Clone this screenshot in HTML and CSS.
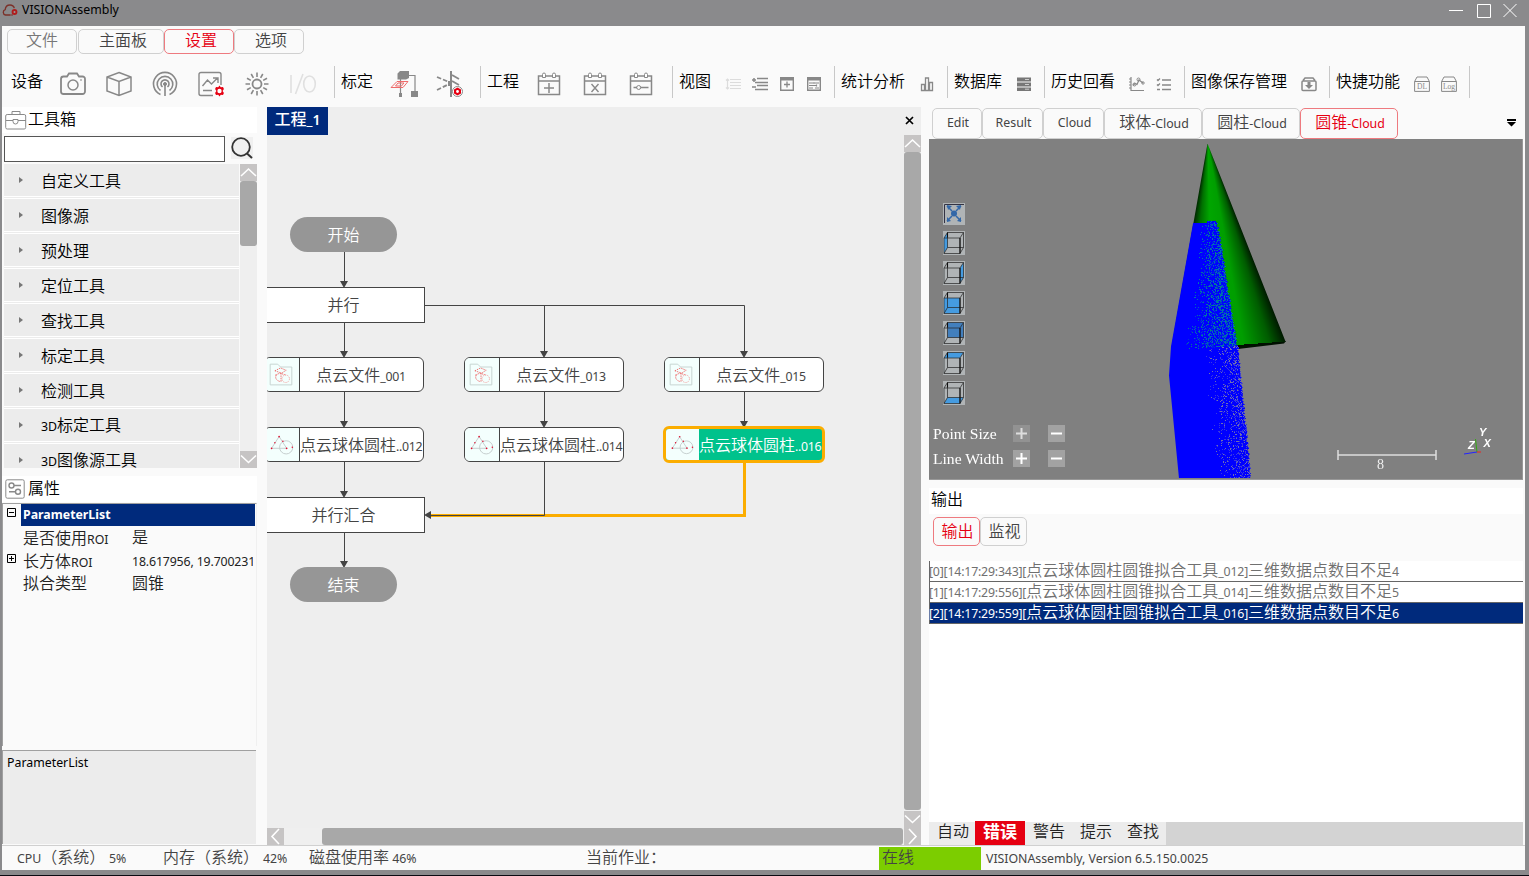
FILE: index.html
```html
<!DOCTYPE html>
<html lang="zh-CN">
<head>
<meta charset="utf-8">
<title>VISIONAssembly</title>
<link rel="stylesheet" href="styles.css">
</head>
<body>
<div class="window">
  <header class="titlebar">
    <svg class="logo" width="16" height="12" viewBox="0 0 16 12"><path d="M8 11H3.500a2.800 2.800 0 0 1-.3-5.400C3.500 2.500 5.500 1 8 1c2.200 0 3.800 1.300 4.300 3.200" fill="none" stroke="#7b3029" stroke-width="1.300"/><circle cx="12.500" cy="8" r="2.900" fill="#b01c1c"/><circle cx="12.500" cy="8" r="1" fill="#999"/><path d="M8 11h3" stroke="#7b3029"/></svg>
    <span class="title">VISIONAssembly</span>
    <svg class="winbtns" width="76" height="20" viewBox="0 0 76 20" fill="none" stroke="#fff"><path d="M4 10.500H18M32.500 4.500h13v13h-13zM58.500 4l13 13M71.500 4l-13 13"/></svg>
  </header>

  <nav class="menu">
    <span class="pill zh dim m1">文件</span><span class="pill zh m2">主面板</span><span class="pill zh on m3">设置</span><span class="pill zh m4">选项</span>
  </nav>

  <div class="toolbar">
    <section class="group g1"><span class="zh">设备</span>
      <div class="big">
        <i><svg width="28" height="28" viewBox="0 0 28 28"><path d="M4.500 6.500H8l2-3h8l2 3h3.500a2.500 2.500 0 0 1 2.500 2.500v12.500a2.500 2.500 0 0 1-2.500 2.500h-19A2.500 2.500 0 0 1 2 21.500V9a2.500 2.500 0 0 1 2.500-2.500z" stroke-width="1.800"/><circle cx="14" cy="15" r="5" stroke-width="1.500"/><path d="M21 10h2"/></svg></i>
        <i><svg width="28" height="28" viewBox="0 0 28 28"><path d="M14 2.500l12 4.500v14l-12 4.500L2 21V7zM2 7l12 4.500L26 7M14 11.500v14" stroke-width="1.500"/></svg></i>
        <i><svg width="28" height="28" viewBox="0 0 28 28"><path d="M9.500 24.500a11.500 11.500 0 1 1 9 0M9.500 20.500a7.800 7.800 0 1 1 9 0M11.500 17a4 4 0 1 1 5 0M14 15v11" stroke-width="1.600"/><circle cx="14" cy="14" r="1.500" fill="#888"/></svg></i>
        <i><svg width="28" height="28" viewBox="0 0 28 28"><path d="M24 15V4.500A2 2 0 0 0 22 2.500H4a2 2 0 0 0-2 2v19a2 2 0 0 0 2 2h12M5.500 16l5-6 4 4 6-6M16 8h5v5M6 20.500h9" stroke-width="1.400"/><path class="red" d="M22.500 15.500l1.300 1.800 2.200-.2.900 2-1.300 1.900 1.300 1.900-.9 2-2.200-.2-1.300 1.800-1.300-1.800-2.200.2-.9-2 1.300-1.900-1.300-1.900.9-2 2.200.2z"/><circle cx="22.500" cy="21" r="2.200" fill="#fff" stroke="none"/></svg></i>
        <i><svg width="28" height="28" viewBox="0 0 28 28"><circle cx="14" cy="14" r="4.500" stroke-width="1.800"/><path d="M14 2.500V7M14 21v4.500M2.500 14H7M21 14h4.500M8.200 4l2.200 3.800M17.600 20.200l2.200 3.800M4 8.200l3.800 2.200M20.200 17.600l3.800 2.200M4 19.800l3.800-2.200M20.200 10.400L24 8.200M8.200 24l2.200-3.800M17.600 7.800L19.800 4" stroke-width="1.600"/></svg></i>
        <i><svg width="28" height="28" viewBox="0 0 28 28"><path d="M2 5v18M6.500 24L14 4" stroke="#e0e0e0" stroke-width="1.600"/><ellipse cx="20.500" cy="14" rx="5.800" ry="8" stroke="#e0e0e0" stroke-width="1.600"/></svg></i>
      </div></section>
    <section class="group g2"><span class="zh">标定</span>
      <div class="big">
        <i><svg width="28" height="28" viewBox="0 0 28 28"><path d="M7.500 3.500L10 1h9v7l-3 1.500H7.500zM21 21h7v6h-7zM9 23h3v4H9z" fill="#888" stroke="none"/><path d="M19 5.500h6V21M10.500 9v14" stroke-width="1.200"/><path d="M1 17.500l6-6h11l-5 6zM5.500 16l2.500-3h6l-2.500 3z" stroke="#ee6b6b"/></svg></i>
        <i><svg width="28" height="28" viewBox="0 0 28 28"><path d="M15 1v26" stroke-width="2"/><path d="M16 5l7 4M16 11l7 4" stroke-width="1.800"/><path d="M1 7l12 5M1 20l12-6" stroke-width="1.800" stroke-dasharray="4.500 2"/><path d="M12 11h4v5h-4z" fill="#888" stroke="none"/><circle cx="21.500" cy="21.500" r="5" fill="#fff"/><path class="red" d="M21.500 17.500l3.500 2v4l-3.500 2-3.500-2v-4z"/><circle cx="21.500" cy="21.500" r="1.400" fill="#fff" stroke="none"/></svg></i>
      </div></section>
    <section class="group g3"><span class="zh">工程</span>
      <div class="big">
        <i><svg width="28" height="28" viewBox="0 0 28 28"><path d="M3.500 6h21v18.500h-21zM4 11h20" stroke-width="1.500"/><path d="M7.500 7.500V4.500a1.500 1.500 0 0 1 3 0v3zM17.500 7.500V4.500a1.500 1.500 0 0 1 3 0v3z" fill="#fff"/><path d="M14 13v10M9 18h10" stroke-width="1.500"/></svg></i>
        <i><svg width="28" height="28" viewBox="0 0 28 28"><path d="M3.500 6h21v18.500h-21zM4 11h20" stroke-width="1.500"/><path d="M7.500 7.500V4.500a1.500 1.500 0 0 1 3 0v3zM17.500 7.500V4.500a1.500 1.500 0 0 1 3 0v3z" fill="#fff"/><path d="M10.500 14l7 8M17.500 14l-7 8" stroke-width="1.400"/></svg></i>
        <i><svg width="28" height="28" viewBox="0 0 28 28"><path d="M3.500 6h21v18.500h-21zM4 11h20" stroke-width="1.500"/><path d="M7.500 7.500V4.500a1.500 1.500 0 0 1 3 0v3zM17.500 7.500V4.500a1.500 1.500 0 0 1 3 0v3z" fill="#fff"/><path d="M6.500 17.500H10M13.500 17.500h8" stroke-width="1.400"/><circle cx="11.700" cy="17.500" r="2"/></svg></i>
      </div></section>
    <section class="group g4"><span class="zh">视图</span>
      <div class="small">
        <i><svg width="16" height="16" viewBox="0 0 16 16"><path d="M5 3.500h11M5 6.500h11M5 9.500h11M5 12.500h11M2.500 3v10M1 4.500L2.500 3 4 4.500M1 11.500L2.500 13 4 11.500" stroke="#dcdcdc" stroke-width="1.200"/></svg></i>
        <i><svg width="16" height="16" viewBox="0 0 16 16"><path d="M5 2.500h11M3 6.500h13M5 9.500h11M3 13.500h13" stroke-width="1.500"/><path d="M0 4h4M2 2v4M0 11h4" stroke-width="1.500"/></svg></i>
        <i><svg width="16" height="16" viewBox="0 0 16 16"><path d="M1.700 1.700h12.600v12.600H1.700z" stroke-width="1.400"/><path d="M1 3h14" stroke-width="3"/><path d="M8 5.500v6M5 8.500h6" stroke-width="1.300"/></svg></i>
        <i><svg width="16" height="16" viewBox="0 0 16 16"><path d="M1.700 1.700h12.600v12.600H1.700z" stroke-width="1.400"/><path d="M1 3h14" stroke-width="3"/><path d="M3 7h4M9 7h4M3 9.500h8M3 12h4M9 12h4M8 6v2M10.500 8.500v2" stroke-width="1.200"/></svg></i>
      </div></section>
    <section class="group g5"><span class="zh">统计分析</span>
      <div class="small"><i><svg width="16" height="16" viewBox="0 0 16 16"><path d="M2.500 8.500h3v6h-3zM6.500 2h3v12.500h-3zM10.500 6.500h3v8h-3z" stroke-width="1.300"/></svg></i></div></section>
    <section class="group g6"><span class="zh">数据库</span>
      <div class="small"><i><svg width="16" height="16" viewBox="0 0 16 16"><path d="M1 1.500h14v4H1zM1 6.500h14v4H1zM1 11.500h14v3.500H1z" fill="#777" stroke="none"/><path d="M9 3.500h4M9 8.500h4M9 13.200h4" stroke="#ccc"/></svg></i></div></section>
    <section class="group g7"><span class="zh">历史回看</span>
      <div class="small">
        <i><svg width="16" height="16" viewBox="0 0 16 16"><path d="M2 1v13.500h13M0 3h2M0 6h2M0 9h2M0 12h2M4 9.500l2-2 2 1L10 4l4 3" stroke-width="1.200"/><circle cx="5.500" cy="8.500" r="1.500"/><circle cx="9.500" cy="3.500" r="1.500"/><circle cx="14" cy="7" r="1.200"/></svg></i>
        <i><svg width="16" height="16" viewBox="0 0 16 16"><path d="M6 4h9M6 9h9M6 13.500h9M1 3.500l1 1 2-2M1 8.500l1 1 2-2M1 13.500h3" stroke-width="1.300"/></svg></i>
      </div></section>
    <section class="group g8"><span class="zh">图像保存管理</span>
      <div class="small"><i><svg width="16" height="16" viewBox="0 0 16 16"><path d="M2 5h12a1 1 0 0 1 1 1v7.500a1 1 0 0 1-1 1H2a1 1 0 0 1-1-1V6a1 1 0 0 1 1-1zM2 4.500l2-2.500h8l2 2.500" stroke-width="1.500"/><path d="M6.500 6h3v3H12l-4 4-4-4h2.500z" fill="#888" stroke="none"/></svg></i></div></section>
    <section class="group g9"><span class="zh">快捷功能</span>
      <div class="small">
        <i><svg width="16" height="16" viewBox="0 0 16 16"><path d="M.6 5.500h14.800v9.900H.6zM.6 5.500L3 1h10l2.400 4.500"/><text x="8" y="12.800" class="tiny">DL</text></svg></i>
        <i><svg width="16" height="16" viewBox="0 0 16 16"><path d="M.6 5.500h14.800v9.900H.6zM.6 5.500L3 1h10l2.400 4.500"/><text x="8" y="12.800" class="tiny">Log</text></svg></i>
      </div></section>
    <section class="group last"></section>
  </div>

  <main class="workspace">
    <aside class="left">
      <div class="head"><svg width="22" height="20" viewBox="0 0 22 20" fill="none" stroke="#8a8a8a"><rect x=".7" y="4.500" width="20" height="14.500" rx="1.500"/><path d="M7 4V1.500h8V4M1 10.500h7M13 10.500h8M8 9.500h5v2a2.500 2.500 0 0 1-5 0z"/></svg><span class="zh">工具箱</span></div>
      <div class="search"><div class="box"></div><svg width="22" height="22" viewBox="0 0 22 22" fill="none" stroke="#333"><circle cx="10" cy="10" r="8.800" stroke-width="1.800"/><path d="M16 16.500l5 4.500" stroke-width="2"/></svg></div>
      <div class="tools">
        <ul class="list">
          <li><span class="zh">自定义工具</span></li><li><span class="zh">图像源</span></li><li><span class="zh">预处理</span></li><li><span class="zh">定位工具</span></li><li><span class="zh">查找工具</span></li><li><span class="zh">标定工具</span></li><li><span class="zh">检测工具</span></li><li><span>3D<span class="zh">标定工具</span></span></li><li><span>3D<span class="zh">图像源工具</span></span></li>
        </ul>
        <div class="vscroll"><b class="sb"><svg width="17" height="17"><path d="M1 12l7.500-7 7.500 7"/></svg></b><b class="thumb t1"></b><b class="sb end"><svg width="17" height="17"><path d="M1 4.500l7.500 7 7.500-7"/></svg></b></div>
      </div>
      <div class="head second"><svg width="20" height="20" viewBox="0 0 20 20" fill="none" stroke="#8a8a8a"><rect x=".8" y=".8" width="18.400" height="18.400" rx="1.500"/><g stroke-width="1.400"><circle cx="6.500" cy="6.500" r="2.500"/><path d="M9 6.500h7M4 12.800h6.500"/><circle cx="13" cy="12.800" r="2.500"/></g></svg><span class="zh">属性</span></div>
      <div class="props">
        <div class="prow sel"><em><svg width="9" height="9"><path d="M.5.500h8v8h-8zM2 4.500h5"/></svg></em><strong>ParameterList</strong></div>
        <div class="prow"><em></em><span class="k"><span class="zh">是否使用</span>ROI</span><span class="v zh">是</span></div>
        <div class="prow"><em><svg width="9" height="9"><path d="M.5.500h8v8h-8zM2 4.500h5M4.500 2v5"/></svg></em><span class="k"><span class="zh">长方体</span>ROI</span><span class="v num-v">18.617956, 19.700231</span></div>
        <div class="prow"><em></em><span class="k zh">拟合类型</span><span class="v zh">圆锥</span></div>
      </div>
      <div class="desc">ParameterList</div>
    </aside>

    <section class="center">
      <div class="doctabs"><span class="doctab"><span class="zh">工程</span>_1</span><svg width="9" height="9" viewBox="0 0 9 9"><path d="M1 1l7 7M8 1L1 8" stroke="#000" stroke-width="1.700"/></svg></div>
      <div class="canvasrow">
        <div class="flow">
          <svg class="edges" width="637" height="693" viewBox="267 135 637 693" fill="none" stroke="#444">
            <path d="M744.500 461V515.500H428" stroke="#fbad00" stroke-width="3"/>
            <path d="M344.500 251v34M344.500 323v32M344.500 392v33M344.500 462v33M344.500 533v32M424 305.500H744.500V355M544.500 305V355M544.500 392v33M744.500 392v33M544.500 462V515.500H428"/>
            <path class="tip" d="M340 281h8l-4 7zM340 351h8l-4 7zM340 421h8l-4 7zM340 491h8l-4 7zM340 561h8l-4 7zM540 351h8l-4 7zM540 421h8l-4 7zM740 351h8l-4 7zM740 421h8l-4 7zM431 511v8l-7-4z"/>
          </svg>
          <div class="term s"><span class="zh">开始</span></div>
          <div class="par p1"><span class="zh">并行</span></div>
          <div class="node c1 r1"><svg class="ico"><use href="#cloudfile"/></svg><span><span class="zh">点云文件</span>_001</span></div>
          <div class="node c2 r1"><svg class="ico"><use href="#cloudfile"/></svg><span><span class="zh">点云文件</span>_013</span></div>
          <div class="node c3 r1"><svg class="ico"><use href="#cloudfile"/></svg><span><span class="zh">点云文件</span>_015</span></div>
          <div class="node c1 r2"><svg class="ico"><use href="#fit"/></svg><span><span class="zh">点云球体圆柱</span>..012</span></div>
          <div class="node c2 r2"><svg class="ico"><use href="#fit"/></svg><span><span class="zh">点云球体圆柱</span>..014</span></div>
          <div class="node c3 r2 active"><svg class="ico"><use href="#fit"/></svg><span><span class="zh">点云球体圆柱</span>..016</span></div>
          <div class="par p2"><span class="zh">并行汇合</span></div>
          <div class="term e"><span class="zh">结束</span></div>
        </div>
        <div class="vscroll"><b class="sb"><svg width="17" height="17"><path d="M1 12l7.500-7 7.500 7"/></svg></b><b class="thumb t2"></b><b class="sb end"><svg width="17" height="17"><path d="M1 4.500l7.500 7 7.500-7"/></svg></b></div>
      </div>
      <div class="hscroll"><b class="sb"><svg width="17" height="17"><path d="M12 1L5 8.500l7 7.500"/></svg></b><b class="hthumb"></b><b class="sb"><svg width="17" height="17"><path d="M5 1l7 7.500L5 16"/></svg></b></div>
    </section>

    <section class="right">
      <div class="vtabs"><span class="pill v1">Edit</span><span class="pill v2">Result</span><span class="pill v3">Cloud</span><span class="pill v4"><span><span class="zh">球体</span>-Cloud</span></span><span class="pill v4"><span><span class="zh">圆柱</span>-Cloud</span></span><span class="pill v4 on"><span><span class="zh">圆锥</span>-Cloud</span></span><svg class="drop" width="9" height="8"><path d="M0 0h9v2H0zM0 3h9L4.500 7.500z"/></svg></div>
      <div class="viewer">
        <canvas id="cloud" width="594" height="340"></canvas>
        <div class="overlay">
          <div class="cubes">
            <i class="fitall"><svg width="22" height="21" viewBox="0 0 22 21"><path d="M1.500 20V1.500H21" stroke="#334"/><path d="M4 3l5 5M18 3l-5 5M4 18l5-5M18 18l-5-5" stroke="#3468a8" stroke-width="1.500"/><path d="M4 2l5 1-4 4zM18 2l-5 1 4 4zM4 19l4-1-4-4zM18 19l-4-1 4-4z" fill="#3468a8"/><circle cx="11" cy="10.500" r="3" fill="#3468a8"/></svg></i>
            <i><svg width="22" height="24"><path class="face" d="M1 7l3.500-5.500v15L1 22z"/><use href="#wire"/></svg></i>
            <i><svg width="22" height="24"><path class="face" d="M17 7l3.500-5.500v15L17 22z"/><use href="#wire"/></svg></i>
            <i><svg width="22" height="24"><path class="face" d="M1 7h16v15.500H1z"/><use href="#wire"/></svg></i>
            <i><svg width="22" height="24"><path class="face deep" d="M4.500 1.500h16v15h-16z"/><use href="#wire"/></svg></i>
            <i><svg width="22" height="24"><path class="face" d="M1 7l3.500-5.500h16L17 7z"/><use href="#wire"/></svg></i>
            <i><svg width="22" height="24"><path class="face" d="M1 22.500l3.500-6h16l-3.500 6z"/><use href="#wire"/></svg></i>
          </div>
          <div class="ctl"><span>Point Size</span><i class="off"><svg width="17" height="17"><path d="M3 8.500h11M8.500 3v11"/></svg></i><i><svg width="17" height="17"><path d="M3 8.500h11"/></svg></i></div>
          <div class="ctl"><span>Line Width</span><i><svg width="17" height="17"><path d="M3 8.500h11M8.500 3v11"/></svg></i><i><svg width="17" height="17"><path d="M3 8.500h11"/></svg></i></div>
        </div>
        <svg class="gauge" width="190" height="58" viewBox="1330 420 190 58"><path d="M1338 455H1436M1338 450v10M1436 450v10" stroke="#ddd" stroke-width="1.500" fill="none"/><text x="1380.500" y="468.500" class="num">8</text><path d="M1477 452l-13 2" stroke="#22f"/><path d="M1477 452l-1.500-13" stroke="#3a1"/><path d="M1477 452h4" stroke="#e22"/><g class="axis"><text x="1479" y="436">Y</text><text x="1483.500" y="447">X</text><text x="1468" y="449">Z</text></g></svg>
      </div>
      <div class="outhead"><span class="zh">输出</span></div>
      <div class="outtabs"><span class="pill zh on">输出</span><span class="pill zh">监视</span></div>
      <div class="log">
        <div class="line">[0][14:17:29:343][<span class="zh">点云球体圆柱圆锥拟合工具</span>_012]<span class="zh">三维数据点数目不足</span>4</div>
        <div class="line">[1][14:17:29:556][<span class="zh">点云球体圆柱圆锥拟合工具</span>_014]<span class="zh">三维数据点数目不足</span>5</div>
        <div class="line cur">[2][14:17:29:559][<span class="zh">点云球体圆柱圆锥拟合工具</span>_016]<span class="zh">三维数据点数目不足</span>6</div>
      </div>
      <div class="bottomtabs zh"><span>自动</span><span class="err">错误</span><span>警告</span><span>提示</span><span>查找</span></div>
    </section>
  </main>

  <footer class="status">
    <span class="s1">CPU<span class="zh">（系统）</span></span><span class="s2">5%</span><span class="s3 zh">内存（系统）</span><span class="s4">42%</span><span class="s5"><span class="zh">磁盘使用率</span> 46%</span><span class="s6 zh">当前作业：</span><span class="online zh">在线</span><span class="ver">VISIONAssembly, Version 6.5.150.0025</span>
  </footer>
</div>
<svg width="0" height="0" class="defs"><defs>
  <symbol id="wire" viewBox="0 0 22 24" overflow="visible"><path d="M1 7h16v15.500H1zM4.500 1.500h16v15h-16zM1 7l3.500-5.500M17 7l3.500-5.500M1 22.500l3.500-6M17 22.500l3.500-6" fill="none" stroke="#222" stroke-width=".7"/><path d="M17 7v15.500M4.500 1.500v5" fill="none" stroke="#111" stroke-width="1.100"/></symbol>
  <symbol id="cloudfile" viewBox="0 0 34 34"><path d="M5.500 5.500h8l3 3h12v19h-23z" fill="none" stroke="#c4d2d0"/><g fill="none" stroke="#ee6a6a" stroke-dasharray="1.500 1"><path d="M10.500 12.500l6-3 6 2.500-5 3zM11 17l5-2 6 2M17 15v9M12 17c-2 4 1 6 4 7"/><circle cx="22" cy="21" r="4" stroke="#f3a5a5"/></g></symbol>
  <symbol id="fit" viewBox="0 0 34 34"><g fill="none" stroke="#c3cccc"><circle cx="22.500" cy="19.500" r="7"/><path d="M7 20.500L15 8l8 12.500z"/></g><g fill="#e01030"><circle cx="15" cy="8" r=".9"/><circle cx="7" cy="20.500" r=".9"/><circle cx="23" cy="20.500" r=".9"/><circle cx="10.500" cy="14.500" r=".8"/><circle cx="19" cy="13" r=".8"/><circle cx="29" cy="19.500" r=".8"/></g></symbol>
</defs></svg>
<script src="cloud.js"></script>
</body>
</html>
```
FILE: styles.css
```css
* { box-sizing: border-box; }
body { margin: 0; width: 1529px; height: 876px; overflow: hidden; background: #8a8a8c; font: 12.350px/20px "Noto Sans", "Noto Sans CJK SC", sans-serif; color: #000; }
i, em { font-style: normal; }
svg { display: block; flex: none; }
.defs { position: absolute; }
.zh { font-family: "Noto Sans CJK SC", sans-serif; font-size: 16px; font-weight: 350; line-height: 20px; letter-spacing: 0; }
.window { height: 876px; padding: 0 4px 0 2px; border-bottom: 1px solid #0a0a12; display: flex; flex-direction: column; }
.titlebar { height: 26px; flex: none; display: flex; align-items: flex-start; }
.logo { margin: 4px 0 0; }
.title { margin-left: 4px; line-height: 19px; }
.winbtns { margin-left: auto; margin-right: 4px; }
.menu { height: 28px; flex: none; background: #fafafa; padding: 3px 0 0 5px; display: flex; }
.pill { border: 1px solid #d0d0d0; border-radius: 5px; display: flex; align-items: center; justify-content: center; color: #444; white-space: nowrap; }
.menu .pill { height: 25px; padding-bottom: 6px; }
.pill.dim { color: #777; }
.pill.on { border-color: #ee7a7f; color: #e60012; }
.m1 { width: 70px; margin-right: 1px; }
.m2 { width: 86px; padding-left: 4px; }
.m3 { width: 70px; padding-left: 4px; }
.m4 { width: 70px; padding-left: 4px; }

.toolbar { height: 53px; flex: none; background: #fafafa; display: flex; padding-top: 12px; }
.group { height: 32px; border-left: 1px solid #c8c8c8; padding: 4px 7px 0; display: flex; justify-content: space-between; white-space: nowrap; }
.g1 { width: 332px; border-color: transparent; padding: 4px 8px 0 8px; }
.g2 { width: 146px; padding: 4px 7px 0 6px; }
.g3 { width: 192px; padding: 4px 8px 0 6px; }
.g4 { width: 162px; padding-left: 6px; }
.g5 { width: 113px; padding-left: 6px; }
.g6 { width: 97px; padding-left: 6px; }
.g7 { width: 140px; padding-left: 6px; }
.g8 { width: 145px; padding-left: 6px; }
.g9 { width: 140px; padding-left: 6px; }
.big, .small { display: flex; align-items: center; height: 28px; }
.big i, .small i { display: flex; justify-content: center; }
.big i { width: 46px; }
.small i { width: 27px; }
.group svg { fill: none; stroke: #888; }
.group .red { fill: #e60012; stroke: none; }
.tiny { font: 7.500px "Liberation Serif", serif; fill: #888; stroke: none; text-anchor: middle; }

.workspace { height: 738px; flex: none; display: flex; background: #fafafa; }
.left { width: 265px; flex: none; padding-right: 10px; }
.head { height: 26px; background: #fff; display: flex; align-items: center; padding-left: 3px; gap: 1px; }
.head svg { margin-top: -1px; }
.head .zh { margin-top: -4px; }
.second { margin-top: 8px; gap: 3px; }
.search { height: 31px; padding: 3px 2px 0; display: flex; gap: 6px; }
.box { width: 221px; height: 26px; border: 1px solid #555; background: #fff; }
.search svg { margin-top: 1px; background: #f0f0f0; }
.tools { height: 304px; display: flex; justify-content: space-between; padding-left: 2px; }
.list { list-style: none; margin: 0; padding: 0; width: 235px; height: 304px; overflow: hidden; background: #ececec; }
.list li { height: 35px; padding: 0 0 3px 37px; display: flex; align-items: center; position: relative; background: linear-gradient(#ececec 32px, #fff 32px, #fff 33px, #ececec 33px, #ececec 34px, #fff 34px); }
.list li::before { content: ""; position: absolute; left: 15px; top: 13px; border-left: 4px solid #777; border-top: 3.500px solid transparent; border-bottom: 3.500px solid transparent; }
.vscroll { width: 17px; background: #efefef; display: flex; flex-direction: column; }
.sb { width: 17px; height: 17px; flex: none; background: #c6c4c4; }
.sb svg { fill: none; stroke: #fff; stroke-width: 1.600; }
.end { margin-top: auto; }
.thumb, .hthumb { background: #a8a8a8; border-radius: 3px; }
.t1 { height: 65px; }
.t2 { height: 658px; }
.props { height: 243px; margin-top: 1px; border: 1px solid #a0a0a0; border-right-color: #f0f0f0; border-bottom: 0; background: #fafafa; overflow: hidden; }
.prow { height: 23px; display: flex; width: 252px; }
.prow em { width: 18px; flex: none; padding: 4px 0 0 4px; }
.prow em svg { fill: none; stroke: #000; }
.prow .k { width: 111px; flex: none; padding-left: 2px; color: #222; white-space: nowrap; line-height: 19px; }
.prow .v { white-space: nowrap; width: 121px; color: #222; line-height: 19px; }
.prow .num-v { overflow: hidden; padding-top: 2px; letter-spacing: -.15px; }
.sel strong { flex: 1; background: #002a7c; color: #fff; height: 22px; padding-left: 2px; line-height: 21px; }
.desc { height: 94px; margin-top: 4px; margin-right: 1px; border: 1px solid #a0a0a0; border-right: 0; border-bottom: 0; background: #ececec; padding: 2px 4px; }

.center { width: 654px; flex: none; background: #eee; display: flex; flex-direction: column; }
.doctabs { height: 28px; display: flex; justify-content: space-between; align-items: flex-start; }
.doctabs svg { margin: 9px 7px 0 0; }
.doctab { width: 61px; height: 28px; background: #002a7c; color: #fff; text-align: center; font-weight: 600; font-size: 14px; line-height: 25px; }
.doctab .zh { font-weight: 500; }
.canvasrow { height: 693px; display: flex; }
.flow { width: 637px; position: relative; overflow: hidden; color: #444; }
.edges { position: absolute; left: 0; top: 0; }
.tip { fill: #444; stroke: none; }
.term, .par, .node { position: absolute; display: flex; align-items: center; justify-content: center; height: 35px; padding-bottom: 2px; }
.term { left: 23px; width: 107px; border-radius: 18px; background: #969696; color: #fff; }
.s { top: 82px; }
.e { top: 432px; }
.par { left: -3px; width: 161px; height: 36px; background: #fff; border: 1px solid #444; padding-right: 2px; }
.p1 { top: 152px; }
.p2 { top: 362px; }
.node { width: 160px; background: #fff; border: 1px solid #444; border-radius: 6px; overflow: hidden; white-space: nowrap; justify-content: flex-start; padding: 0; letter-spacing: -.3px; }
.node > span { flex: 1; text-align: center; padding: 1px 1px 0 0; }
.ico { width: 35px; height: 34px; padding-right: 2px; background: #f3fffd; border-right: 1px solid #444; }
.c1 { left: -3px; }
.c2 { left: 197px; }
.c3 { left: 397px; }
.r1 { top: 222px; }
.r2 { top: 292px; }
.active { left: 396px; top: 291px; width: 162px; height: 37px; border: 3px solid #fbad00; background: #00c28c; color: #fff; }
.active .ico { width: 33px; border: 0; }
.hscroll { height: 17px; display: flex; background: #efefef; }
.hthumb { margin-left: 38px; margin-right: 1px; flex: 1; }

.right { width: 594px; flex: none; margin-left: 8px; display: flex; flex-direction: column; }
.vtabs { height: 32px; display: flex; padding: 1px 0 0 3px; color: #444; }
.vtabs .pill { height: 31px; padding: 0 0 2px 2px; }
.v1 { width: 50px; } .v2 { width: 61px; } .v3 { width: 61px; } .v4 { width: 98px; }
.drop { margin: 11px 7px 0 auto; }
.viewer { height: 341px; flex: none; position: relative; background: #808080; border-right: 1px solid #999; border-bottom: 1px solid #999; }
#cloud, .overlay, .gauge { position: absolute; left: 0; top: 0; }
.gauge { left: 401px; top: 281px; }
.overlay { padding: 64px 0 0 4px; color: #fff; }
.cubes { padding-left: 10px; display: flex; flex-direction: column; gap: 6px; margin-bottom: 16px; }
.cubes i { width: 22px; height: 24px; background: #b0b4b6; }
.cubes .fitall { height: 22px; }
.cubes svg { fill: none; }
.face { fill: #459be0; }
.face.deep { fill: #427fbd; }
.ctl { height: 25px; display: flex; align-items: center; }
.ctl span { width: 80px; font: 15.600px "Liberation Serif", serif; }
.ctl i { background: #a2a2a2; width: 17px; height: 17px; margin-right: 18px; }
.ctl i.off { background: #929292; }
.ctl svg { stroke: #fff; stroke-width: 2; fill: none; }
.ctl .off svg { stroke: #ddd; }
.num { fill: #eee; font: 14px "Liberation Serif", serif; text-anchor: middle; }
.axis { fill: #fff; font: italic bold 11px "Liberation Sans", sans-serif; }
.outhead { height: 26px; flex: none; margin-top: 8px; padding: 0 2px; background: #fff; }
.outtabs { height: 47px; flex: none; padding: 3px 4px; display: flex; }
.outtabs .pill { width: 47px; height: 29px; padding: 0 0 4px 2px; }
.log { height: 261px; flex: none; background: #fff; }
.line { height: 21px; border-bottom: 1px solid #666; border-left: 1px solid #666; color: #707070; white-space: nowrap; line-height: 17px; letter-spacing: -.2px; text-indent: -1px; }
.line .zh { line-height: 17px; }
.cur { background: #002a7c; color: #fff; }
.bottomtabs { height: 23px; background: #d3d3d3; display: flex; color: #222; }
.bottomtabs span { width: 47px; padding-left: 8px; background: #ececec; line-height: 17px; }
.bottomtabs span:first-child { width: 46px; padding-left: 8px; }
.bottomtabs .err { width: 50px; height: 24px; margin-top: -1px; padding-left: 8px; background: #e60012; color: #fff; font-weight: 700; font-size: 17px; line-height: 19px; }

.status { height: 25px; flex: none; background: #fafafa; border-top: 1px solid #d0d0d0; display: flex; color: #444; white-space: nowrap; line-height: 22px; }
.status > span { flex: none; }
.s1 { width: 107px; padding-left: 15px; }
.s2, .s4 { padding-top: 2px; }
.s2 { width: 54px; }
.s3 { width: 100px; }
.s4 { width: 44px; }
.s5 { width: 279px; padding-left: 2px; }
.s6 { width: 293px; }
.online { width: 102px; margin-top: 1px; padding-left: 3px; background: #7ccd00; line-height: 18px; }
.ver { padding: 2px 0 0 5px; letter-spacing: -.02px; }
```
FILE: cloud.js
```javascript
// Draws the fitted cone and the scanned point cloud in viewer coordinates.
const ctx = document.getElementById('cloud').getContext('2d');
ctx.translate(-929, -139);

let seed = 7;
const rnd = () => (seed = (seed * 16807) % 2147483647) / 2147483647;
const poly = (color, pts) => {
  ctx.fillStyle = color;
  ctx.beginPath();
  pts.forEach(([x, y]) => ctx.lineTo(x, y));
  ctx.fill();
};

// Cone base, then the shaded side drawn as slices from the apex.
poly('#001000', [[1190, 343], [1286, 341], [1284, 343.500], [1238, 349], [1190, 349]]);
for (let y = 143; y < 346; y++) {
  const t = (y - 143) / 198;
  const left = 1207.500 - 35 * t;
  const edge = 1207.500 + 78 * t;
  const right = Math.min(edge, 1286 - Math.max(0, y - 341) * 14);
  const g = ctx.createLinearGradient(left, 0, edge + 1, 0);
  g.addColorStop(0, '#002800');
  g.addColorStop(0.15, '#007000');
  g.addColorStop(0.35, '#00a600');
  g.addColorStop(0.62, '#009e00');
  g.addColorStop(0.85, '#005c00');
  g.addColorStop(1, '#001400');
  ctx.fillStyle = g;
  ctx.fillRect(left, y, Math.max(0, right - left), 1);
}

// Left and right outline of the scanned body at a given height.
const leftAt = y => y < 346 ? 1193 - 22 * (y - 223) / 123
  : y < 375 ? 1171 - 2 * (y - 346) / 29 : 1169 + 10 * (y - 375) / 103;
const rightAt = y => y < 346 ? 1217 + 20 * (y - 221) / 125 : 1238 + 13 * (y - 346) / 132;

for (let y = 221; y < 478; y++) {
  const l = leftAt(y);
  const r = rightAt(y) + rnd() * 2 - 1;
  const start = y < 223 ? 1207 : l;
  ctx.fillStyle = '#0000ff';
  ctx.fillRect(start, y, r - start, 1);
  for (let x = Math.ceil(start); x < r; x++) {
    const u = (x - l) / (r - l);
    if (y < 349 - (x - 1182) * 0.06) {
      const low = y > 325 ? 0.16 : 0.26;
      const p = Math.max(0, Math.min(0.5, (u - low) * 0.9));
      if (rnd() < p) {
        ctx.fillStyle = ['#0030d8', '#0048cc', '#0064c0', '#0078a8', '#008088'][Math.floor(rnd() * 5)];
        ctx.fillRect(x, y, 1, 1);
      }
    } else if (rnd() < Math.max(0, (u - 0.5) * 0.75)) {
      ctx.fillStyle = rnd() < 0.6 ? '#3838e0' : '#7070b0';
      ctx.fillRect(x, y, 1, 1);
    }
  }
}
```
